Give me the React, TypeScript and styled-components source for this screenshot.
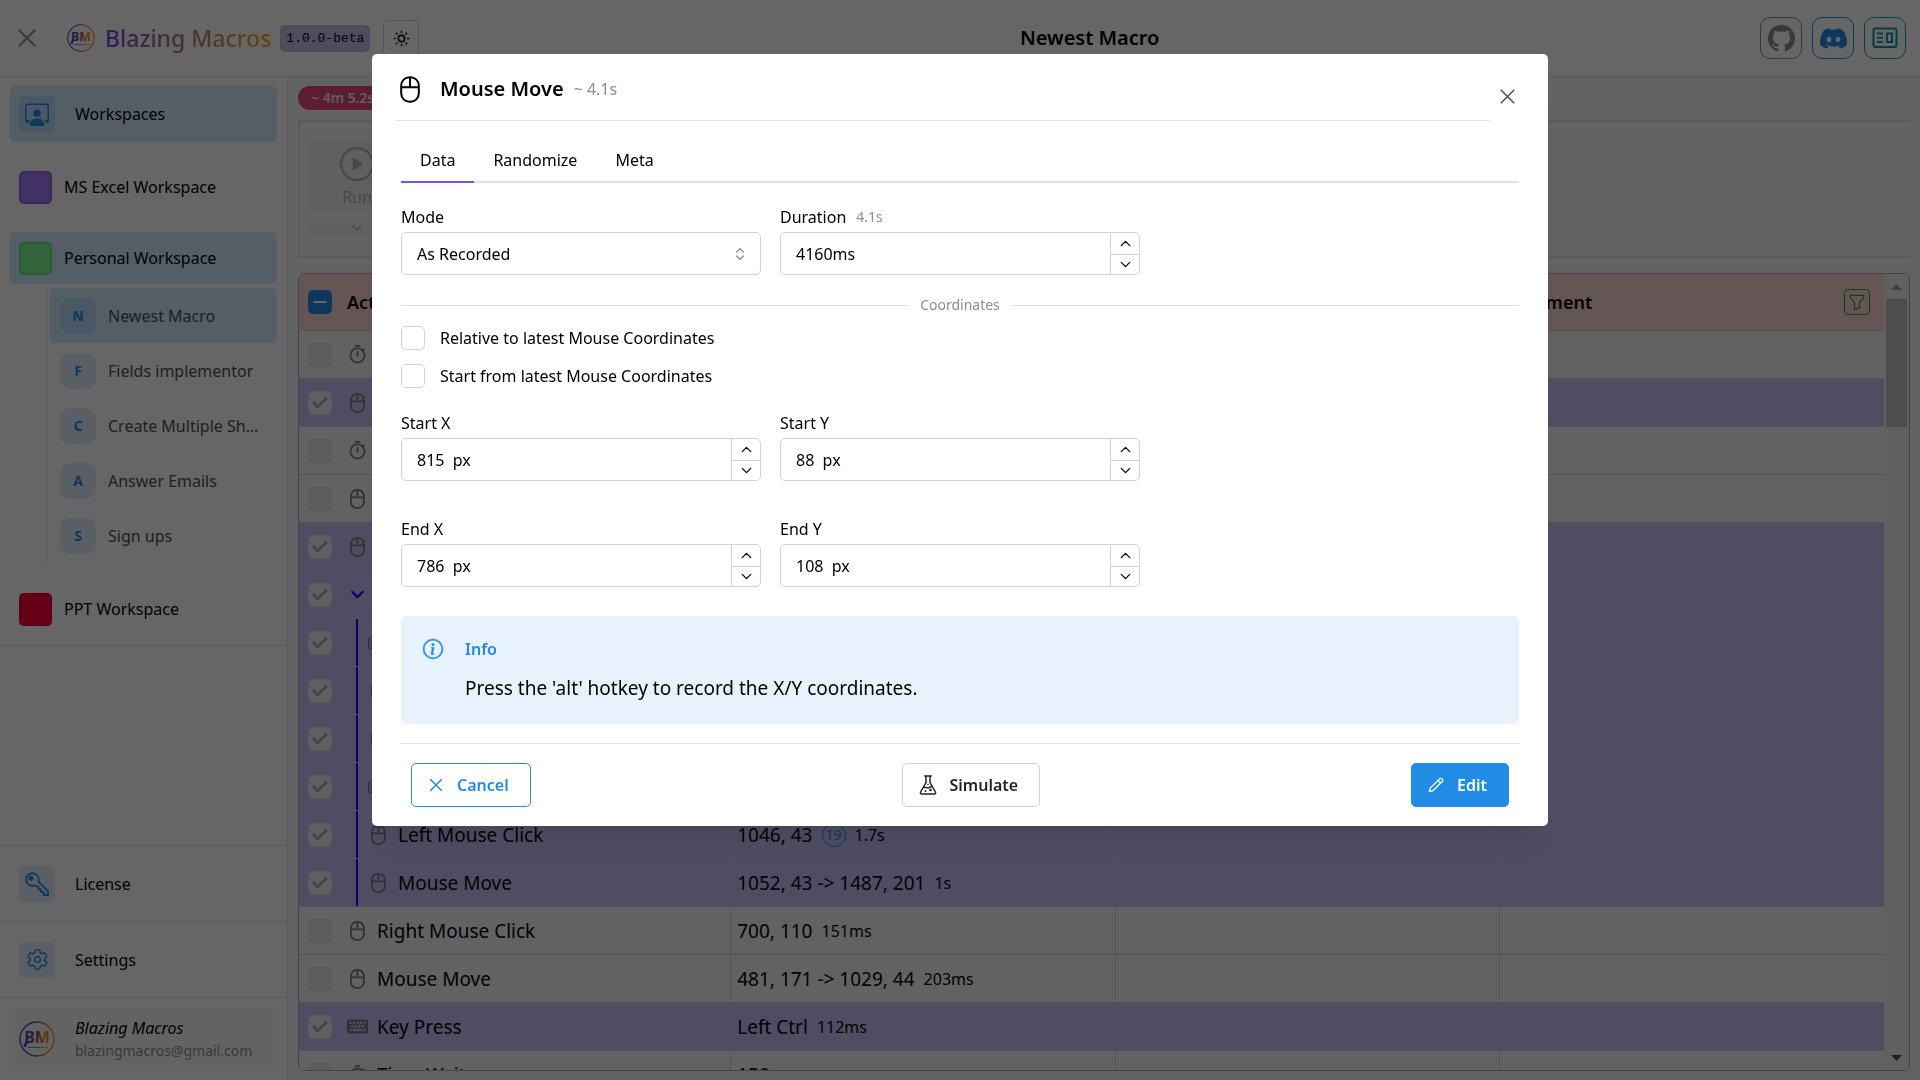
import React, { useState } from "react";
import styled, { createGlobalStyle, css } from "styled-components";
import { Check, ChevronDown, ChevronUp, ChevronsUpDown, Minus, Pencil } from "lucide-react";
import { BsGithub, BsDiscord, BsInfoCircle, BsKeyboard, BsPersonWorkspace, BsPlayCircle } from "react-icons/bs";
import { FaKeyboard } from "react-icons/fa";
import { MdOutlineTimer } from "react-icons/md";
import { IoSettingsOutline } from "react-icons/io5";
import { TbFilter, TbSun } from "react-icons/tb";

const color = {
  line: "#dee2e6",
  inputLine: "#ced4da",
  blue: "#228be6",
  violet: "#7950f2",
  dim: "#868e96",
  muted: "#adb5bd",
  active: "#d0ebff",
  tint: "rgba(34, 110, 230, 0.13)",
  selected: "#c4c1f9",
  row: "#f4f4f4",
  cellLine: "#cfd0d8",
  tableLine: "#a4abc4",
  indent: "#2a00ff",
};

const GlobalStyle = createGlobalStyle`
  *, *::before, *::after { box-sizing: border-box; }
  body {
    margin: 0;
    background: #fff;
    color: #000;
    font-family: "Noto Sans", "Open Sans", sans-serif;
    font-size: 16px;
    line-height: 22px;
  }
  button, input, select { font: inherit; color: inherit; }
  button { cursor: pointer; }
  h1, h2, p, ul { margin: 0; padding: 0; }
  ul { list-style: none; }
  svg { display: block; flex: none; }
`;

/* ---------- shell ---------- */

const Shell = styled.div`
  display: flex;
  flex-direction: column;
  height: 100vh;
  overflow: hidden;
`;

const Header = styled.header`
  display: flex;
  align-items: center;
  justify-content: space-between;
  flex: none;
  height: 77px;
  padding: 0 14px 0 10px;
  border-bottom: 1px solid ${color.line};
`;

const HeaderGroup = styled.div<{ $gap: number }>`
  display: flex;
  align-items: center;
  gap: ${(p) => p.$gap}px;
`;

const PlainButton = styled.button<{ $faint?: boolean }>`
  display: grid;
  place-items: center;
  width: 34px;
  height: 34px;
  padding: 0;
  border: 0;
  background: none;
  color: ${(p) => (p.$faint ? color.dim : "#495057")};
`;

const Brand = styled.a`
  display: flex;
  align-items: center;
  gap: 10px;
  margin-left: 14px;
  text-decoration: none;
`;

const BrandName = styled.span`
  background: linear-gradient(90deg, #7048e8, #fab005);
  background-clip: text;
  -webkit-background-clip: text;
  color: transparent;
  font-size: 23px;
  font-weight: 500;
  line-height: 32px;
`;

const Version = styled.code`
  padding: 2px 6px;
  border-radius: 5px;
  background: #c9bfec;
  font-family: "Liberation Mono", monospace;
  font-size: 13px;
  line-height: 23px;
`;

const ThemeButton = styled.button`
  display: grid;
  place-items: center;
  width: 36px;
  height: 36px;
  margin-left: 4px;
  padding: 0;
  border: 1px solid ${color.inputLine};
  border-radius: 5px;
  background: none;
`;

const PageTitle = styled.h1`
  font-size: 20px;
  font-weight: 600;
  line-height: 30px;
`;

const SocialLink = styled.a<{ $tone: string }>`
  display: grid;
  place-items: center;
  width: 42px;
  height: 42px;
  border: 1px solid ${(p) => p.$tone};
  border-radius: 10px;
  color: ${(p) => p.$tone};
`;

const Body = styled.div`
  display: flex;
  flex: 1;
  min-height: 0;
`;

/* ---------- sidebar ---------- */

const Sidebar = styled.aside`
  display: flex;
  flex-direction: column;
  flex: none;
  width: 288px;
  border-right: 1px solid ${color.line};
`;

const Nav = styled.nav`
  display: flex;
  flex-direction: column;
  gap: 19px;
  padding: 9px 10px 10px;
  border-bottom: 1px solid ${color.line};
`;

const SideLink = styled.a<{ $active?: boolean; $kind: "tile" | "swatch" }>`
  display: flex;
  align-items: center;
  gap: ${(p) => (p.$kind === "tile" ? 20 : 12)}px;
  height: ${(p) => (p.$kind === "tile" ? 56 : 52)}px;
  padding: 0 9px;
  border-radius: 5px;
  background: ${(p) => (p.$active ? color.active : "none")};
  color: #000;
  text-decoration: none;
`;

const Tile = styled.span<{ $round?: boolean }>`
  display: grid;
  place-items: center;
  flex: none;
  width: 36px;
  height: 36px;
  border-radius: ${(p) => (p.$round ? 10 : 5)}px;
  background: ${color.tint};
  color: ${color.blue};
  font-size: 14px;
  font-weight: 700;
`;

const Swatch = styled.span<{ $fill: string }>`
  width: 33px;
  height: 33px;
  border-radius: 5px;
  background: ${(p) => p.$fill};
  box-shadow: inset 0 0 0 1px rgba(0, 0, 0, 0.1), inset 0 0 4px rgba(0, 0, 0, 0.15);
`;

const MacroList = styled.ul`
  margin: 4px 0 0 36px;
  padding: 0 0 1px 3px;
  border-left: 1px solid ${color.line};
`;

const MacroLink = styled.a<{ $active?: boolean }>`
  display: flex;
  align-items: center;
  gap: 12px;
  height: 55px;
  padding: 0 10px;
  border-radius: 5px;
  background: ${(p) => (p.$active ? color.active : "none")};
  color: #495057;
  text-decoration: none;
`;

const MacroName = styled.span`
  overflow: hidden;
  text-overflow: ellipsis;
  white-space: nowrap;
`;

const SideFooter = styled.div`
  margin-top: auto;
`;

const FooterItem = styled.div`
  padding: 10px;
  border-top: 1px solid ${color.line};

  > a { height: 55px; }
`;

const UserCard = styled.div`
  display: flex;
  align-items: center;
  gap: 20px;
  height: 62px;
  padding: 0 9px;
  background: #f5faf8;
`;

const UserName = styled.div`
  font-style: italic;
  line-height: 24px;
`;

const UserMail = styled.div`
  color: ${color.dim};
  font-size: 14px;
`;

/* ---------- main ---------- */

const Main = styled.main`
  display: flex;
  flex-direction: column;
  align-items: stretch;
  flex: 1;
  min-width: 0;
  padding: 9px 10px;
  background: #f5faf8;
`;

const DurationBadge = styled.span`
  align-self: flex-start;
  height: 24px;
  margin-bottom: 10px;
  padding: 0 13px;
  border-radius: 12px;
  background: #e64980;
  color: #e9ecef;
  font-size: 14px;
  font-weight: 600;
  line-height: 24px;
`;

const Toolbar = styled.section`
  padding: 19px 9px;
  border: solid ${color.line};
  border-width: 2px 0 2px 2px;
  margin-bottom: 15px;
`;

const RunGroup = styled.div`
  display: grid;
  gap: 5px;
  width: 96px;
`;

const RunButton = styled.button<{ $small?: boolean }>`
  display: flex;
  flex-direction: column;
  align-items: center;
  justify-content: center;
  gap: 5px;
  height: ${(p) => (p.$small ? 19 : 72)}px;
  padding: 0;
  border: 0;
  border-radius: 5px;
  background: #eef0f2;
  color: ${color.muted};
`;

const TableFrame = styled.section`
  display: flex;
  flex: 1;
  min-height: 0;
  overflow: hidden;
  border: 1px solid ${color.tableLine};
  border-radius: 6px;
`;

const TableView = styled.div`
  flex: 1;
  min-width: 0;
  overflow: hidden;
`;

const Table = styled.table`
  width: 100%;
  border-collapse: separate;
  border-spacing: 0;
  table-layout: fixed;
  font-size: 19px;
`;

const HeadCell = styled.th<{ $flush?: boolean; $check?: boolean }>`
  width: ${(p) => (p.$check ? "48px" : "auto")};
  height: 57px;
  padding: 0 ${(p) => (p.$check ? 0 : 14)}px 0 ${(p) => (p.$check ? 9 : p.$flush ? 0 : 6)}px;
  border-bottom: 1px solid ${color.cellLine};
  background: #fdd5d2;
  font-size: 18px;
  font-weight: 600;
  text-align: left;
`;

const HeadContent = styled.div`
  display: flex;
  align-items: center;
  justify-content: space-between;
`;

const FilterButton = styled.button`
  display: grid;
  place-items: center;
  width: 26px;
  height: 26px;
  padding: 0;
  border: 1px solid #2f9e44;
  border-radius: 4px;
  background: none;
  color: #2f9e44;
`;

const Row = styled.tr<{ $selected?: boolean }>`
  background: ${(p) => (p.$selected ? color.selected : color.row)};
`;

const Cell = styled.td<{ $kind?: "check" | "name" }>`
  height: 48px;
  padding: 0 0 0 ${(p) => (p.$kind === "check" ? 9 : p.$kind === "name" ? 0 : 6)}px;
  border-bottom: 1px solid ${color.cellLine};
  border-right: ${(p) => (p.$kind === "check" ? "0" : `1px solid ${color.cellLine}`)};

  &:last-child { border-right: 0; }
`;

const NameContent = styled.div<{ $nested?: boolean }>`
  display: flex;
  align-items: center;
  gap: 9px;
  height: 47px;
  ${(p) =>
    p.$nested &&
    css`
      margin-left: 9px;
      padding-left: 10px;
      border-left: 2px solid ${color.indent};
    `}
`;

const ActionIcon = styled.span<{ $accent?: boolean }>`
  display: grid;
  place-items: center;
  width: 21px;
  color: ${(p) => (p.$accent ? color.indent : "#7c7c7c")};
`;

const ValueContent = styled.div`
  display: flex;
  align-items: center;
  gap: 9px;
`;

const Small = styled.span`
  font-size: 16px;
`;

const Count = styled.span`
  display: grid;
  place-items: center;
  width: 24px;
  height: 24px;
  border: 1px solid ${color.blue};
  border-radius: 50%;
  color: ${color.blue};
  font-size: 14px;
`;

const ScrollTrack = styled.div`
  display: flex;
  flex-direction: column;
  align-items: center;
  flex: none;
  width: 25px;
  background: #f1f1f1;
`;

const ScrollArrow = styled.span<{ $down?: boolean }>`
  display: grid;
  place-items: center;
  width: 21px;
  height: 25px;
  margin-top: ${(p) => (p.$down ? "auto" : 0)};
  color: ${(p) => (p.$down ? "#505050" : "#a3a3a3")};
`;

const ScrollThumb = styled.span`
  width: 21px;
  height: 128px;
  background: #c1c1c1;
`;

/* ---------- tick boxes ---------- */

const TickWrap = styled.span`
  display: grid;
  flex: none;
  width: 24px;
  height: 24px;

  > * { grid-area: 1 / 1; }
  > svg { place-self: center; pointer-events: none; }
`;

const TickInput = styled.input<{ $tone: "open" | "locked" | "filled" }>`
  appearance: none;
  width: 24px;
  height: 24px;
  margin: 0;
  border: 1px solid
    ${(p) => (p.$tone === "filled" ? color.blue : p.$tone === "open" ? color.inputLine : "#d9dce0")};
  border-radius: 5px;
  background: ${(p) => (p.$tone === "filled" ? color.blue : p.$tone === "open" ? "#fff" : "#e6e8eb")};

  &:checked { background: #ededed; border-color: #e2e2e2; }
`;

/* ---------- modal ---------- */

const Overlay = styled.div`
  position: fixed;
  inset: 0;
  display: flex;
  align-items: flex-start;
  justify-content: center;
  padding: 54px 16px;
  background: rgba(0, 0, 0, 0.6);
`;

const Modal = styled.div`
  width: 100%;
  max-width: 1176px;
  border-radius: 5px;
  background: #fff;
  box-shadow: 0 1px 3px rgba(0, 0, 0, 0.05), 0 36px 28px -7px rgba(0, 0, 0, 0.05),
    0 17px 17px -7px rgba(0, 0, 0, 0.05);
`;

const ModalHeader = styled.div`
  display: flex;
  align-items: center;
  padding: 18px 24px 0;
`;

const ModalTitle = styled.div`
  display: flex;
  align-items: center;
  flex: 1;
  height: 49px;
  padding: 0 0 14px 4px;
  border-bottom: 1px solid ${color.line};
`;

const ModalName = styled.h2`
  margin: 0 10px 0 20px;
  font-size: 20px;
  font-weight: 600;
  line-height: 28px;
`;

const Dim = styled.span<{ $small?: boolean }>`
  color: ${color.dim};
  font-size: ${(p) => (p.$small ? 14 : 16)}px;
`;

const ModalBody = styled.form`
  padding: 18px 29px 19px;
`;

const Tabs = styled.div`
  display: flex;
  border-bottom: 2px solid ${color.line};
`;

const Tab = styled.button<{ $active?: boolean }>`
  margin-bottom: -2px;
  padding: 10px 19px;
  border: 0;
  border-bottom: 2px solid ${(p) => (p.$active ? color.violet : "transparent")};
  background: none;
`;

const Fields = styled.div<{ $top: number }>`
  display: grid;
  grid-template-columns: repeat(3, 1fr);
  gap: 19px;
  margin-top: ${(p) => p.$top}px;
`;

const Field = styled.div`
  display: grid;
  gap: 4px;
`;

const LabelRow = styled.div`
  display: flex;
  align-items: center;
  gap: 10px;
`;

const Control = styled.div`
  display: grid;
  grid-template-columns: 1fr auto;
  height: 43px;
  overflow: hidden;
  border: 1px solid ${color.inputLine};
  border-radius: 5px;
  background: #fff;
`;

const TextInput = styled.input`
  min-width: 0;
  padding: 0 15px;
  border: 0;
  outline: 0;
  background: none;
`;

const Steppers = styled.div`
  display: grid;
  grid-template-rows: 1fr 1fr;
  width: 29px;
  border-left: 1px solid ${color.inputLine};
`;

const Stepper = styled.button`
  display: grid;
  place-items: center;
  padding: 0;
  border: 0;
  background: none;

  & + & { border-top: 1px solid ${color.inputLine}; }
`;

const SelectControl = styled(Control)`
  > * { grid-row: 1; }
  > select { grid-column: 1 / 3; }
  > svg { grid-column: 2; align-self: center; margin-right: 12px; color: ${color.dim}; pointer-events: none; }
`;

const Select = styled.select`
  appearance: none;
  padding: 0 15px;
  border: 0;
  outline: 0;
  background: none;
`;

const Divider = styled.div`
  display: flex;
  align-items: center;
  gap: 12px;
  margin: 20px 0 11px;
  color: ${color.dim};
  font-size: 14px;
  line-height: 20px;

  &::before, &::after { content: ""; flex: 1; height: 1px; background: ${color.line}; }
`;

const Options = styled.div`
  display: grid;
  gap: 14px;
`;

const Option = styled.label`
  display: flex;
  align-items: center;
  justify-self: start;
  gap: 15px;
`;

const Alert = styled.div`
  display: grid;
  grid-template-columns: 20px 1fr;
  align-items: center;
  column-gap: 22px;
  row-gap: 10px;
  margin-top: 29px;
  padding: 19px 22px 21px;
  border-radius: 5px;
  background: #e7f2fc;
  color: ${color.blue};
`;

const AlertTitle = styled.div`
  font-weight: 600;
  line-height: 28px;
`;

const AlertText = styled.p`
  grid-column: 2;
  color: #000;
  font-size: 19px;
  line-height: 30px;
`;

const Actions = styled.div`
  display: flex;
  align-items: center;
  justify-content: space-between;
  margin-top: 19px;
  padding: 19px 10px 0;
  border-top: 1px solid ${color.line};
`;

const ActionButton = styled.button<{ $look: "outline" | "default" | "filled" }>`
  display: flex;
  align-items: center;
  gap: 13px;
  height: 44px;
  padding: 0 21px 0 16px;
  border: 1px solid ${(p) => (p.$look === "default" ? color.inputLine : color.blue)};
  border-radius: 5px;
  background: ${(p) => (p.$look === "filled" ? color.blue : "#fff")};
  color: ${(p) => (p.$look === "filled" ? "#fff" : p.$look === "outline" ? color.blue : "#212529")};
  font-weight: 600;
`;

/* ---------- drawings ---------- */

const Cross = ({ size, box = size, stroke = 1.5 }: { size: number; box?: number; stroke?: number }) => {
  const a = (box - size) / 2 + 0.75;
  const b = box - a;
  return (
    <svg width={box} height={box} fill="none" stroke="currentColor" strokeWidth={stroke} aria-hidden>
      <path d={`M${a} ${a}L${b} ${b}M${b} ${a}L${a} ${b}`} />
    </svg>
  );
};

const MouseIcon = ({ height = 20, stroke = 2.4 }: { height?: number; stroke?: number }) => (
  <svg height={height} width={(height * 20) / 27} viewBox="0 0 20 27" fill="none" stroke="currentColor" strokeWidth={stroke} aria-hidden>
    <rect x="1.2" y="1.2" width="17.6" height="24.6" rx="8.3" />
    <path d="M1.2 11.2h17.6M10 1.2v10" />
  </svg>
);

const KeyIcon = () => (
  <svg width="24" height="24" viewBox="0 0 24 24" fill="none" stroke="currentColor" strokeWidth="1.8" aria-hidden>
    <path d="M13.4 9.6 23 19.2V23h-4.2v-2.8H16v-2.8h-2.6v-2.6l-3.6-1.4A6.3 6.3 0 1 1 13.4 9.6Z" />
    <circle cx="6" cy="6.2" r="1.6" fill="currentColor" />
  </svg>
);

const NewsIcon = () => (
  <svg width="26" height="22" viewBox="0 0 26 22" fill="none" stroke="currentColor" strokeWidth="2" aria-hidden>
    <rect x="1.5" y="1.5" width="23" height="18.5" rx="2" />
    <path d="M5 6.500h6M5 10.800h6M5 15h6" />
    <rect x="15" y="6.5" width="5" height="8.5" />
  </svg>
);

const FlaskIcon = () => (
  <svg width="18" height="20" viewBox="0 0 18 20" fill="none" stroke="currentColor" strokeWidth="1.5" aria-hidden>
    <path d="M5.200 1h7.600M7 1v6.500L1.600 17c-.5.900 0 2 1.100 2h12.600c1.100 0 1.600-1.100 1.100-2L11 7.500V1M4.200 12.600c2-1.400 3.600.9 5.600.2 1.300-.4 1.800-1.500 3.600-1.400" />
    <circle cx="6.500" cy="16" r="1" fill="currentColor" stroke="none" />
    <circle cx="11.500" cy="15" r="1.300" fill="currentColor" stroke="none" />
    <circle cx="9" cy="9.500" r=".8" fill="currentColor" stroke="none" />
  </svg>
);

const Logo = ({ size, id }: { size: number; id: string }) => (
  <svg width={size} height={size} viewBox="0 0 36 36" role="img" aria-label="BM">
    <defs>
      <linearGradient id={id} gradientUnits="userSpaceOnUse" x1="0" y1="0" x2="36" y2="0">
        <stop offset="0.15" stopColor="#5f3dc4" />
        <stop offset="0.5" stopColor="#8a4a7a" />
        <stop offset="0.7" stopColor="#f08c1a" />
      </linearGradient>
    </defs>
    <circle cx="18" cy="18" r="17" fill="none" stroke={`url(#${id})`} strokeWidth="1.4" />
    <text x="18" y="22" textAnchor="middle" fontFamily="Noto Sans, sans-serif" fontSize="16" fontWeight="700" fill={`url(#${id})`}>
      BM
    </text>
    <path d="M9 17 5 25M9 20l-3 6" stroke="#5f3dc4" strokeWidth="1.6" />
    <path d="M9 26.500h20" stroke={`url(#${id})`} strokeWidth="1.2" strokeDasharray="2 .6" />
  </svg>
);

const Triangle = ({ down }: { down?: boolean }) => (
  <svg width="11" height="6" viewBox="0 0 11 6" fill="currentColor">
    <path d={down ? "M0 0h11L5.500 6z" : "M0 6h11L5.500 0z"} />
  </svg>
);

/* ---------- composed parts ---------- */

type ActionKind = "timer" | "mouse" | "keys" | "keyboard" | "group";

const icons: Record<ActionKind, React.ReactNode> = {
  timer: <MdOutlineTimer size={21} />,
  mouse: <MouseIcon />,
  keys: <BsKeyboard size={21} />,
  keyboard: <FaKeyboard size={21} />,
  group: <ChevronDown size={21} strokeWidth={2.5} />,
};

interface Action {
  kind: ActionKind;
  name: string;
  on?: boolean;
  nested?: boolean;
  value?: string;
  count?: number;
  time?: string;
}

const actions: Action[] = [
  { kind: "timer", name: "Time Wait" },
  { kind: "mouse", name: "Mouse Move", on: true },
  { kind: "timer", name: "Time Wait" },
  { kind: "mouse", name: "Mouse Move" },
  { kind: "mouse", name: "Mouse Move", on: true },
  { kind: "group", name: "Group", on: true },
  { kind: "keys", name: "Key Press", on: true, nested: true },
  { kind: "mouse", name: "Mouse Move", on: true, nested: true },
  { kind: "mouse", name: "Mouse Move", on: true, nested: true },
  { kind: "keys", name: "Key Press", on: true, nested: true },
  { kind: "mouse", name: "Left Mouse Click", on: true, nested: true, value: "1046, 43", count: 19, time: "1.7s" },
  { kind: "mouse", name: "Mouse Move", on: true, nested: true, value: "1052, 43 -> 1487, 201", time: "1s" },
  { kind: "mouse", name: "Right Mouse Click", value: "700, 110", time: "151ms" },
  { kind: "mouse", name: "Mouse Move", value: "481, 171 -> 1029, 44", time: "203ms" },
  { kind: "keyboard", name: "Key Press", on: true, value: "Left Ctrl", time: "112ms" },
  { kind: "timer", name: "Time Wait", value: "150" },
];

const macros = ["Newest Macro", "Fields implementor", "Create Multiple Sheets", "Answer Emails", "Sign ups"];

const ActionRow = ({ action }: { action: Action }) => (
  <Row $selected={action.on}>
    <Cell $kind="check">
      <TickWrap>
        <TickInput $tone="locked" type="checkbox" defaultChecked={action.on} disabled aria-label={action.name} />
        {action.on && <Check size={18} strokeWidth={4} color="#a9aeb4" />}
      </TickWrap>
    </Cell>
    <Cell $kind="name">
      <NameContent $nested={action.nested}>
        <ActionIcon $accent={action.kind === "group"}>{icons[action.kind]}</ActionIcon>
        {action.name}
      </NameContent>
    </Cell>
    <Cell>
      <ValueContent>
        {action.value && <span>{action.value}</span>}
        {action.count && <Count>{action.count}</Count>}
        {action.time && <Small>{action.time}</Small>}
      </ValueContent>
    </Cell>
    <Cell />
    <Cell />
  </Row>
);

const NumberField = ({ id, label, note, initial }: { id: string; label: string; note?: string; initial: string }) => {
  const [value, setValue] = useState(initial);
  const step = (by: number) => setValue((v) => v.replace(/-?\d+/, (n) => String(Number(n) + by)));
  return (
    <Field>
      <LabelRow>
        <label htmlFor={id}>{label}</label>
        {note && <Dim $small>{note}</Dim>}
      </LabelRow>
      <Control>
        <TextInput id={id} value={value} onChange={(e) => setValue(e.target.value)} />
        <Steppers>
          <Stepper type="button" aria-label={`Increase ${label}`} onClick={() => step(1)}>
            <ChevronUp size={17} strokeWidth={1.8} />
          </Stepper>
          <Stepper type="button" aria-label={`Decrease ${label}`} onClick={() => step(-1)}>
            <ChevronDown size={17} strokeWidth={1.8} />
          </Stepper>
        </Steppers>
      </Control>
    </Field>
  );
};

const AppHeader = () => (
  <Header>
    <HeaderGroup $gap={9}>
      <PlainButton $faint aria-label="Close sidebar"><Cross size={18} stroke={1.8} /></PlainButton>
      <Brand href="#">
        <Logo size={28} id="brand-ring" />
        <BrandName>Blazing Macros</BrandName>
      </Brand>
      <Version>1.0.0-beta</Version>
      <ThemeButton aria-label="Toggle theme"><TbSun size={19} /></ThemeButton>
    </HeaderGroup>
    <PageTitle>Newest Macro</PageTitle>
    <HeaderGroup $gap={10}>
      <SocialLink href="#" $tone="#868e96" aria-label="GitHub"><BsGithub size={27} /></SocialLink>
      <SocialLink href="#" $tone={color.blue} aria-label="Discord"><BsDiscord size={27} /></SocialLink>
      <SocialLink href="#" $tone="#1098ad" aria-label="News"><NewsIcon /></SocialLink>
    </HeaderGroup>
  </Header>
);

const AppSidebar = () => (
  <Sidebar>
    <Nav>
      <SideLink href="#" $kind="tile" $active>
        <Tile><BsPersonWorkspace size={24} /></Tile>
        Workspaces
      </SideLink>
      <SideLink href="#" $kind="swatch">
        <Swatch $fill="#a578ff" />
        MS Excel Workspace
      </SideLink>
      <div>
        <SideLink href="#" $kind="swatch" $active>
          <Swatch $fill="#78ff91" />
          Personal Workspace
        </SideLink>
        <MacroList>
          {macros.map((name, i) => (
            <li key={name}>
              <MacroLink href="#" $active={i === 0}>
                <Tile $round>{name[0]}</Tile>
                <MacroName>{name}</MacroName>
              </MacroLink>
            </li>
          ))}
        </MacroList>
      </div>
      <SideLink href="#" $kind="swatch">
        <Swatch $fill="#ff003c" />
        PPT Workspace
      </SideLink>
    </Nav>
    <SideFooter>
      <FooterItem>
        <SideLink href="#" $kind="tile"><Tile><KeyIcon /></Tile>License</SideLink>
      </FooterItem>
      <FooterItem>
        <SideLink href="#" $kind="tile"><Tile><IoSettingsOutline size={23} /></Tile>Settings</SideLink>
      </FooterItem>
      <FooterItem>
        <UserCard>
          <Logo size={36} id="user-ring" />
          <div>
            <UserName>Blazing Macros</UserName>
            <UserMail>blazingmacros@gmail.com</UserMail>
          </div>
        </UserCard>
      </FooterItem>
    </SideFooter>
  </Sidebar>
);

const Workspace = () => (
  <Main>
    <DurationBadge>~ 4m 5.2s</DurationBadge>
    <Toolbar>
      <RunGroup>
        <RunButton disabled><BsPlayCircle size={34} />Run</RunButton>
        <RunButton disabled $small aria-label="Run options"><ChevronDown size={16} /></RunButton>
      </RunGroup>
    </Toolbar>
    <TableFrame>
      <TableView>
        <Table>
          <thead>
            <tr>
              <HeadCell $check>
                <TickWrap>
                  <TickInput $tone="filled" type="checkbox" aria-label="Select all" />
                  <Minus size={20} strokeWidth={2.5} color="#fff" />
                </TickWrap>
              </HeadCell>
              <HeadCell $flush>Action</HeadCell>
              <HeadCell>Data</HeadCell>
              <HeadCell />
              <HeadCell>
                <HeadContent>
                  Comment
                  <FilterButton aria-label="Filter"><TbFilter size={20} strokeWidth={1.5} /></FilterButton>
                </HeadContent>
              </HeadCell>
            </tr>
          </thead>
          <tbody>
            {actions.map((action, i) => <ActionRow key={i} action={action} />)}
          </tbody>
        </Table>
      </TableView>
      <ScrollTrack aria-hidden>
        <ScrollArrow><Triangle /></ScrollArrow>
        <ScrollThumb />
        <ScrollArrow $down><Triangle down /></ScrollArrow>
      </ScrollTrack>
    </TableFrame>
  </Main>
);

const options = ["Relative to latest Mouse Coordinates", "Start from latest Mouse Coordinates"];
const tabs = ["Data", "Randomize", "Meta"];

const EditModal = () => {
  const [tab, setTab] = useState(tabs[0]);
  return (
    <Overlay>
      <Modal role="dialog" aria-modal="true" aria-labelledby="modal-name">
        <ModalHeader>
          <ModalTitle>
            <MouseIcon height={27} stroke={2} />
            <ModalName id="modal-name">Mouse Move</ModalName>
            <Dim>~ 4.1s</Dim>
          </ModalTitle>
          <PlainButton aria-label="Close"><Cross size={15} /></PlainButton>
        </ModalHeader>
        <ModalBody onSubmit={(e) => e.preventDefault()}>
          <Tabs role="tablist">
            {tabs.map((t) => (
              <Tab key={t} type="button" role="tab" aria-selected={t === tab} $active={t === tab} onClick={() => setTab(t)}>
                {t}
              </Tab>
            ))}
          </Tabs>
          <Fields $top={23}>
            <Field>
              <label htmlFor="mode">Mode</label>
              <SelectControl>
                <Select id="mode"><option>As Recorded</option></Select>
                <ChevronsUpDown size={16} />
              </SelectControl>
            </Field>
            <NumberField id="duration" label="Duration" note="4.1s" initial="4160ms" />
          </Fields>
          <Divider>Coordinates</Divider>
          <Options>
            {options.map((o) => (
              <Option key={o}>
                <TickWrap><TickInput $tone="open" type="checkbox" /></TickWrap>
                {o}
              </Option>
            ))}
          </Options>
          <Fields $top={24}>
            <NumberField id="start-x" label="Start X" initial="815  px" />
            <NumberField id="start-y" label="Start Y" initial="88  px" />
          </Fields>
          <Fields $top={37}>
            <NumberField id="end-x" label="End X" initial="786  px" />
            <NumberField id="end-y" label="End Y" initial="108  px" />
          </Fields>
          <Alert>
            <BsInfoCircle size={20} stroke="currentColor" strokeWidth={0.4} overflow="visible" />
            <AlertTitle>Info</AlertTitle>
            <AlertText>Press the 'alt' hotkey to record the X/Y coordinates.</AlertText>
          </Alert>
          <Actions>
            <ActionButton type="button" $look="outline"><Cross size={13} box={16} />Cancel</ActionButton>
            <ActionButton type="button" $look="default"><FlaskIcon />Simulate</ActionButton>
            <ActionButton type="submit" $look="filled"><Pencil size={16} />Edit</ActionButton>
          </Actions>
        </ModalBody>
      </Modal>
    </Overlay>
  );
};

export default function App() {
  return (
    <>
      <GlobalStyle />
      <Shell>
        <AppHeader />
        <Body>
          <AppSidebar />
          <Workspace />
        </Body>
      </Shell>
      <EditModal />
    </>
  );
}
